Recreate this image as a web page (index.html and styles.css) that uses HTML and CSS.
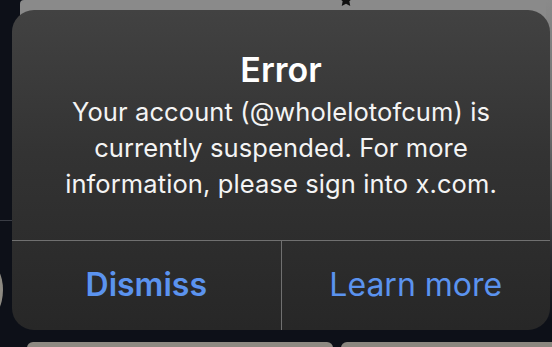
FILE: index.html
```html
<!DOCTYPE html>
<html lang="en">
<head>
<meta charset="utf-8">
<title>Error</title>
<link rel="stylesheet" href="styles.css">
</head>
<body>
<div class="scene">
  <div class="bg-top"></div>
  <div class="bg-right"></div>
  <div class="bg-line"></div>
  <div class="bg-circle"></div>
  <div class="bg-bottom">
    <div class="tile tile-a"></div>
    <div class="tile tile-b"></div>
  </div>
  <svg class="star" width="16" height="16" viewBox="0 0 24 24" aria-hidden="true">
    <path d="M12 1.5l3.1 6.6 7.2.9-5.3 5 1.4 7.1L12 17.6l-6.4 3.5 1.4-7.1-5.3-5 7.2-.9z" fill="#111"/>
  </svg>
  <div class="alert" role="alertdialog">
    <div class="alert-body">
      <h1 class="alert-title">Error</h1>
      <p class="alert-message">Your account (@wholelotofcum) is currently suspended. For more information, please sign into x.com.</p>
    </div>
    <div class="alert-actions">
      <button class="alert-btn alert-btn-primary">Dismiss</button>
      <button class="alert-btn">Learn more</button>
    </div>
  </div>
</div>
</body>
</html>
```
FILE: styles.css
```css
* { box-sizing: border-box; }
html, body { margin: 0; padding: 0; }
body {
  width: 552px;
  height: 347px;
  overflow: hidden;
  background: #0d1018;
  font-family: Inter, "Noto Sans", "Liberation Sans", sans-serif;
}
.scene {
  position: relative;
  width: 552px;
  height: 347px;
  padding: 10px 2px 0 12px;
}
.bg-top {
  position: absolute;
  left: 20px; top: 0; right: 0;
  height: 60px;
  background: #8a8a8a;
  border-top-left-radius: 4px;
}
.bg-right {
  position: absolute;
  right: 0; top: 0;
  width: 6px; height: 320px;
  background: linear-gradient(#8a8a8a, #6e6e6e 40%, #2a2b30 80%, #0d1018);
}
.bg-line {
  position: absolute;
  left: 0; top: 220px;
  width: 14px; height: 1px;
  background: #3a3d45;
}
.bg-circle {
  position: absolute;
  left: -28px; top: 262px;
  width: 31px; height: 56px;
  border-radius: 50%;
  background: #8d8a82;
}
.bg-bottom {
  position: absolute;
  left: 27px; right: 0; top: 342px;
  height: 20px;
  display: flex;
  gap: 8px;
}
.tile {
  height: 100%;
  background: #8e8a82;
  border-radius: 6px 6px 0 0;
}
.tile-a { width: 306px; }
.tile-b { flex: 1; border-radius: 6px 0 0 0; background: #8b877f; }
.star {
  position: absolute;
  left: 338px; top: -8px;
}
.alert {
  position: relative;
  width: 538px;
  height: 320px;
  border-radius: 22px;
  background: linear-gradient(180deg, #424242 0%, #333333 45%, #272727 100%);
  display: flex;
  flex-direction: column;
  overflow: hidden;
}
.alert-body {
  height: 231px;
  padding: 40px 28px 0;
  text-align: center;
  color: #fff;
  border-bottom: 1px solid #707070;
}
.alert-title {
  margin: 0;
  font-size: 34px;
  font-weight: 600;
  line-height: 40px;
  letter-spacing: 0;
}
.alert-message {
  margin: 4px 0 0;
  font-size: 25.5px;
  font-weight: 400;
  line-height: 36px;
  letter-spacing: 0.1px;
  color: #f4f4f4;
}
.alert-actions {
  flex: 1;
  display: flex;
}
.alert-btn {
  flex: 1;
  margin: 0;
  padding: 0 0 3px;
  border: 0;
  background: transparent;
  font-family: inherit;
  font-size: 32px;
  font-weight: 400;
  color: #5b93ef;
  text-align: center;
}
.alert-btn + .alert-btn {
  border-left: 1px solid #707070;
}
.alert-btn-primary { font-weight: 600; }
```
